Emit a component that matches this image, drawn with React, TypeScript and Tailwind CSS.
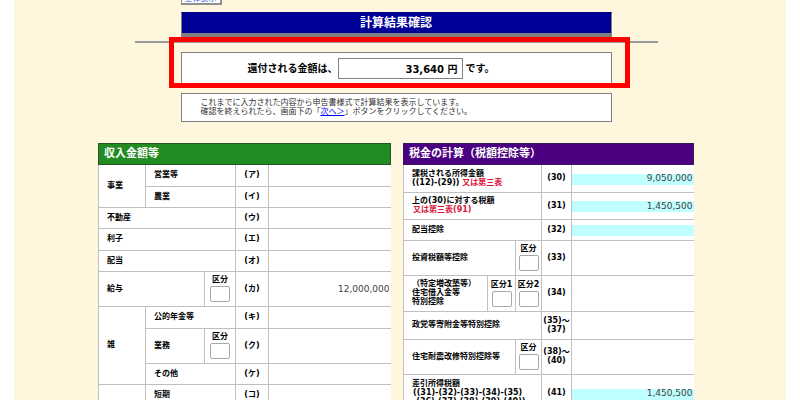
import type { ReactNode } from "react";

const cell = "border border-[#c0c0c0] p-0";
const label = `${cell} pb-0.5 pl-2 text-left font-bold leading-[9px]`;
const code = `${cell} pb-0.5 text-center font-bold leading-[9px]`;

function Kubun({ name, id }: { name: string; id: string }) {
  return (
    <td className={`${cell} pb-0.5`}>
      <div className="flex flex-col items-center font-bold">
        <label htmlFor={id} className="leading-[11px] whitespace-nowrap">{name}</label>
        <input id={id} type="text" className="mt-px h-4 w-5 rounded-xs border border-[#a8a8a8] bg-white" />
      </div>
    </td>
  );
}

function Amount({ name, value = "", filled = false }: { name: string; value?: string; filled?: boolean }) {
  return (
    <td className="border-y border-l border-[#c0c0c0] p-0">
      <input
        aria-label={name}
        readOnly
        value={value}
        className={`mt-px block h-[11px] w-full pr-px text-right text-[9px] text-[#404040] ${filled ? "bg-[#c0ffff]" : "bg-white"}`}
      />
    </td>
  );
}

function Panel({ title, tone, cols, children }: { title: string; tone: string; cols: ReactNode; children: ReactNode }) {
  return (
    <table className="w-full table-fixed border-collapse bg-white">
      <colgroup>{cols}</colgroup>
      <thead>
        <tr className="h-[21px]">
          <th colSpan={5} className={`border p-0 pl-[5px] text-left text-[11px] leading-[18px] text-white ${tone}`}>
            {title}
          </th>
        </tr>
      </thead>
      <tbody>{children}</tbody>
    </table>
  );
}

function Income() {
  return (
    <Panel
      title="収入金額等"
      tone="bg-[#228b22] border-[#245524]"
      cols={<><col className="w-[47px]" /><col className="w-[59px]" /><col className="w-[31px]" /><col className="w-[33px]" /><col /></>}
    >
      <tr className="h-[22px]">
        <th rowSpan={2} className={label}>事業</th>
        <th colSpan={2} className={label}>営業等</th>
        <td className={code}>(ア)</td><Amount name="営業等" />
      </tr>
      <tr className="h-[21px]">
        <th colSpan={2} className={label}>農業</th>
        <td className={code}>(イ)</td><Amount name="農業" />
      </tr>
      <tr className="h-[21px]">
        <th colSpan={3} className={label}>不動産</th>
        <td className={code}>(ウ)</td><Amount name="不動産" />
      </tr>
      <tr className="h-[22px]">
        <th colSpan={3} className={label}>利子</th>
        <td className={code}>(エ)</td><Amount name="利子" />
      </tr>
      <tr className="h-[21px]">
        <th colSpan={3} className={label}>配当</th>
        <td className={code}>(オ)</td><Amount name="配当" />
      </tr>
      <tr className="h-[35px]">
        <th colSpan={2} className={label}>給与</th>
        <Kubun name="区分" id="salary-kubun" />
        <td className={code}>(カ)</td><Amount name="給与" value="12,000,000" />
      </tr>
      <tr className="h-[22px]">
        <th rowSpan={3} className={label}>雑</th>
        <th colSpan={2} className={label}>公的年金等</th>
        <td className={code}>(キ)</td><Amount name="公的年金等" />
      </tr>
      <tr className="h-[35px]">
        <th className={label}>業務</th>
        <Kubun name="区分" id="business-kubun" />
        <td className={code}>(ク)</td><Amount name="業務" />
      </tr>
      <tr className="h-[21px]">
        <th colSpan={2} className={label}>その他</th>
        <td className={code}>(ケ)</td><Amount name="その他" />
      </tr>
      <tr className="h-[21px]">
        <th className={label}></th>
        <th colSpan={2} className={label}>短期</th>
        <td className={code}>(コ)</td><Amount name="短期" />
      </tr>
    </Panel>
  );
}

function Tax() {
  return (
    <Panel
      title="税金の計算（税額控除等）"
      tone="bg-[#4b0082] border-[#3a1560]"
      cols={<><col className="w-[84px]" /><col className="w-[28px]" /><col className="w-[26px]" /><col className="w-[30px]" /><col /></>}
    >
      <tr className="h-[28px]">
        <th colSpan={3} className={label}>課税される所得金額<br />((12)-(29)) <span className="text-[#dc143c]">又は第三表</span></th>
        <td className={code}>(30)</td><Amount name="課税される所得金額" value="9,050,000" filled />
      </tr>
      <tr className="h-[27px]">
        <th colSpan={3} className={label}>上の(30)に対する税額<br /><span className="pl-px text-[#dc143c]">又は第三表(91)</span></th>
        <td className={code}>(31)</td><Amount name="上の(30)に対する税額" value="1,450,500" filled />
      </tr>
      <tr className="h-[21px]">
        <th colSpan={3} className={label}>配当控除</th>
        <td className={code}>(32)</td><Amount name="配当控除" filled />
      </tr>
      <tr className="h-[35px]">
        <th colSpan={2} className={label}>投資税額等控除</th>
        <Kubun name="区分" id="investment-kubun" />
        <td className={code}>(33)</td><Amount name="投資税額等控除" />
      </tr>
      <tr className="h-[36px]">
        <th className={label}>（特定増改築等）<br />住宅借入金等<br />特別控除</th>
        <Kubun name="区分1" id="housing-kubun-1" />
        <Kubun name="区分2" id="housing-kubun-2" />
        <td className={code}>(34)</td><Amount name="住宅借入金等特別控除" />
      </tr>
      <tr className="h-[28px]">
        <th colSpan={3} className={label}>政党等寄附金等特別控除</th>
        <td className={code}>(35)～<br />(37)</td><Amount name="政党等寄附金等特別控除" />
      </tr>
      <tr className="h-[35px]">
        <th colSpan={2} className={label}>住宅耐震改修特別控除等</th>
        <Kubun name="区分" id="seismic-kubun" />
        <td className={code}>(38)～<br />(40)</td><Amount name="住宅耐震改修特別控除等" />
      </tr>
      <tr className="h-[38px]">
        <th colSpan={3} className={label}>差引所得税額<br /><span className="pl-px">((31)-(32)-(33)-(34)-(35)</span><br /><span className="pl-px">-(36)-(37)-(38)-(39)-(40))</span></th>
        <td className={code}>(41)</td><Amount name="差引所得税額" value="1,450,500" filled />
      </tr>
    </Panel>
  );
}

export default function App() {
  return (
    <div className="h-screen overflow-hidden bg-white px-[14px] font-['DejaVu_Sans','Noto_Sans_CJK_JP',sans-serif] text-[8px] text-black">
      <main className="h-full bg-[#fff7dd] pr-2">
        <div className="mx-auto w-[431px]">
          <div className="flex h-[5px] items-end overflow-hidden">
            <button type="button" className="h-[13px] w-[41px] shrink-0 border border-r-2 border-b-2 border-[#909090] bg-white text-[8px] leading-[9px] text-[#4169e1]">
              全体表示
            </button>
          </div>
          <h1 className="mt-[7px] h-[25px] border border-b-4 border-[#808080] border-t-[#000080] bg-[#000099] text-center text-[12px] leading-5 font-bold text-white">
            計算結果確認
          </h1>
        </div>
        <hr className="mx-auto mt-1 w-[523px] border-t-2 border-[#999999]" />
        <div className="mx-auto w-[431px]">
          <section className="relative mt-[9px] flex h-8 items-center justify-center border border-[#808080] bg-white pr-[50px] text-[10px] font-bold">
            <label htmlFor="refund">還付される金額は、</label>
            <input
              id="refund"
              readOnly
              value="33,640 円"
              className="h-[21px] w-[125px] border border-[#808080] bg-white pr-1 text-right font-bold"
            />
            <span className="pl-[3px]">です。</span>
            <div className="pointer-events-none absolute -top-[16px] -right-[19px] -bottom-[5px] -left-[13px] border-5 border-[#ff0000]" />
          </section>
          <p className="mt-[9px] border border-[#808080] bg-white pt-1 pb-[5px] pl-[19px] leading-[9px] text-[#303030]">
            これまでに入力された内容から申告書様式で計算結果を表示しています。
            <br />
            確認を終えられたら、画面下の「<a href="#next" className="text-[#0000ff] underline">次へ＞</a>」ボタンをクリックしてください。
          </p>
        </div>
        <div className="mx-auto mt-[21px] grid w-[596px] grid-cols-[293px_291px] items-start justify-between">
          <Income />
          <Tax />
        </div>
      </main>
    </div>
  );
}
